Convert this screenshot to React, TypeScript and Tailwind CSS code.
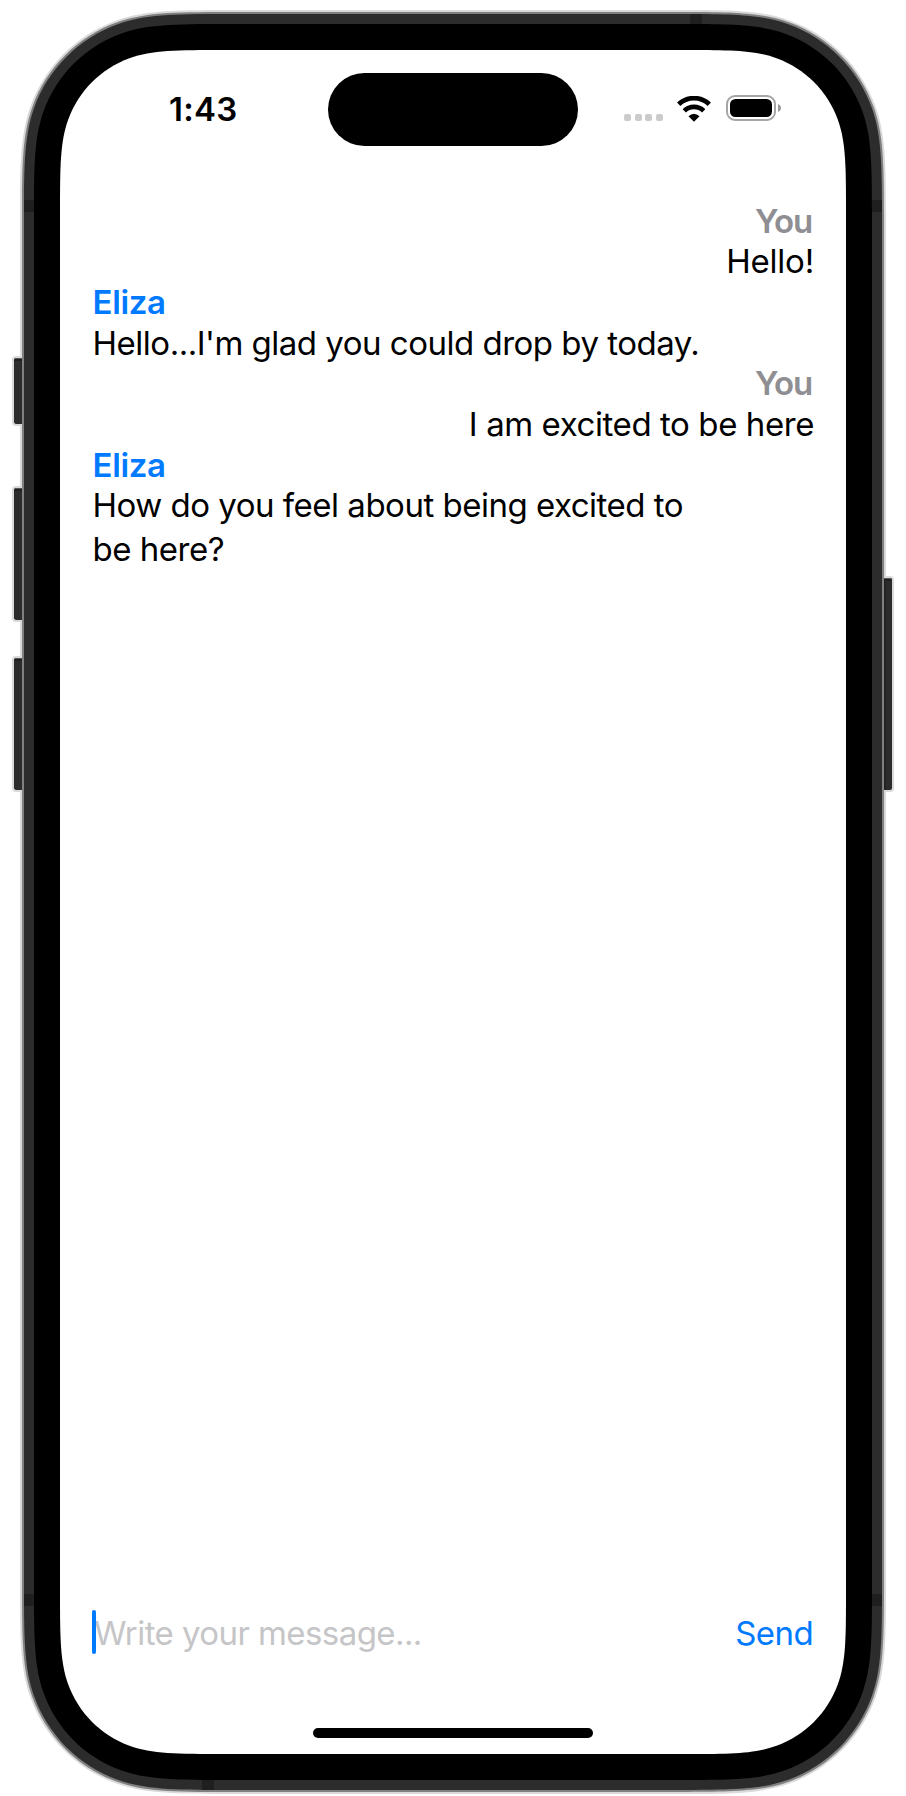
import type { ReactNode } from 'react';

type Point = [number, number];

// One corner as three cubic segments, from the vertical edge to the horizontal one, in units of the radius.
const SMOOTH: Point[] = [
  [0, 1.5], [0, 1.06], [0, 0.838],
  [0.074911, 0.631494], [0.169059, 0.372824], [0.372824, 0.169059],
  [0.631494, 0.074911], [0.838, 0], [1.06, 0], [1.5, 0],
];
// The same three segments for a plain quarter circle, used to offset the smooth corner outwards.
const ROUND: Point[] = [
  [0, 1], [0, 0.8893], [0.0185, 0.7791],
  [0.0545, 0.6744], [0.1547, 0.3834], [0.3834, 0.1547],
  [0.6744, 0.0545], [0.7791, 0.0185], [0.8893, 0], [1, 0],
];

const SCREEN_RADIUS = 110;

/** Outline of a w×h box whose corners lie `offset` px outside the screen's corners. */
function outline(w: number, h: number, offset: number): string {
  const corner = SMOOTH.map(([x, y], i): Point => [
    x * SCREEN_RADIUS + ROUND[i][0] * offset,
    y * SCREEN_RADIUS + ROUND[i][1] * offset,
  ]);
  const mirrored = [...corner].reverse();
  const corners: Point[][] = [
    corner,
    mirrored.map(([x, y]): Point => [w - x, y]),
    corner.map(([x, y]): Point => [w - x, h - y]),
    mirrored.map(([x, y]): Point => [x, h - y]),
  ];
  const d = corners
    .map((points, i) => {
      const [first, ...rest] = points.map(([x, y]) => `${x.toFixed(2)} ${y.toFixed(2)}`);
      return `${i === 0 ? 'M' : 'L'}${first}C${rest.join(' ')}`;
    })
    .join('');
  return `path("${d}Z")`;
}

type LayerProps = { w: number; h: number; offset: number; className: string; children: ReactNode };

function Layer({ w, h, offset, className, children }: LayerProps) {
  return (
    <div className={className} style={{ width: w, height: h, clipPath: outline(w, h, offset) }}>
      {children}
    </div>
  );
}

function Antennas() {
  return (
    <>
      <span className="absolute top-0 left-[666px] h-[10px] w-[12px] bg-[#1f1f1f]" />
      <span className="absolute bottom-0 left-[178px] h-[10px] w-[12px] bg-[#1f1f1f]" />
      <span className="absolute top-[186px] left-0 h-[12px] w-[10px] bg-[#1f1f1f]" />
      <span className="absolute top-[186px] right-0 h-[12px] w-[10px] bg-[#1f1f1f]" />
      <span className="absolute top-[1580px] left-0 h-[12px] w-[10px] bg-[#1f1f1f]" />
      <span className="absolute top-[1580px] right-0 h-[12px] w-[10px] bg-[#1f1f1f]" />
    </>
  );
}

function LeftKey({ className }: { className: string }) {
  return (
    <div className={`w-[10px] rounded-l-[4px] border-2 border-r-0 border-[#dadada] bg-[#2c2c2c] ${className}`}>
      <div className="h-[3px] rounded-tl-[2px] border-t border-[#555] bg-[#202020]" />
    </div>
  );
}

function WifiIcon() {
  return (
    <svg width="34" height="26" viewBox="0 0 34 26" fill="none" stroke="#000">
      <path d="M1.7 8.3A22 22 0 0 1 32.3 8.3" strokeWidth="4.7" />
      <path d="M7.3 14.8A13.8 13.8 0 0 1 26.7 14.8" strokeWidth="4.7" />
      <path d="M11.5 20.2Q17 15.2 22.5 20.2L17 25.7Z" fill="#000" stroke="none" />
    </svg>
  );
}

function BatteryIcon() {
  return (
    <div className="flex items-center gap-[2px]">
      <div className="h-[26px] w-[50px] rounded-[9px] border-2 border-[#a6a6a6] p-[2px]">
        <div className="h-full w-full rounded-[5.5px] bg-black" />
      </div>
      <svg width="3" height="8" viewBox="0 0 3 8">
        <path d="M0 0C1.8.7 3 2.2 3 4S1.8 7.3 0 8Z" fill="#999" />
      </svg>
    </div>
  );
}

function StatusBar() {
  return (
    <header className="grid h-[118px] shrink-0 grid-cols-[268px_250px_1fr] items-center">
      <span className="-mt-px pl-[109px] text-[33px] leading-[36px] font-semibold tracking-[0.3px]">1:43</span>
      <div className="mt-[0.5px] h-[73.5px] rounded-full bg-black" />
      <div className="-mt-[2px] flex items-center pl-[46px]">
        <div className="mt-[19px] flex gap-[3.67px]">
          <span className="size-[7px] rounded-[2px] bg-[#cbcbcb]" />
          <span className="size-[7px] rounded-[2px] bg-[#cbcbcb]" />
          <span className="size-[7px] rounded-[2px] bg-[#cbcbcb]" />
          <span className="size-[7px] rounded-[2px] bg-[#cbcbcb]" />
        </div>
        <div className="mt-px ml-[14.3px]">
          <WifiIcon />
        </div>
        <div className="ml-[14.7px]">
          <BatteryIcon />
        </div>
      </div>
    </header>
  );
}

function Conversation() {
  return (
    <main className="flex flex-1 flex-col pt-[32.8px] pr-8 pl-[32.6px] text-[33px] leading-[40.667px] tracking-[-0.48px]">
      <div className="text-right">
        <p className="pr-[2px] font-semibold tracking-[-1.2px] text-[#8e8e93]">You</p>
        <p className="tracking-[-0.2px]">Hello!</p>
      </div>
      <div>
        <p className="font-semibold tracking-[-0.35px] text-[#007aff]">Eliza</p>
        <p className="tracking-[-0.5px]">Hello...I'm glad you could drop by today.</p>
      </div>
      <div className="text-right">
        <p className="pr-[2px] font-semibold tracking-[-1.2px] text-[#8e8e93]">You</p>
        <p className="tracking-[-0.42px]">I am excited to be here</p>
      </div>
      <div>
        <p className="font-semibold tracking-[-0.35px] text-[#007aff]">Eliza</p>
        <p className="-mt-[2.5px] max-w-[620px] leading-[44px] tracking-[-0.5px]">
          How do you feel about being excited to be here?
        </p>
      </div>
    </main>
  );
}

function Composer() {
  return (
    <div className="flex h-[44px] items-center px-8 text-[33px] leading-[44px]">
      <span className="z-10 -mr-[2px] h-[44px] w-[4px] rounded-full bg-[#007aff]" />
      <input
        className="h-[44px] min-w-0 flex-1 bg-transparent pt-[2px] tracking-[-0.57px] outline-none placeholder:text-[#c5c5c7]"
        placeholder="Write your message..."
      />
      <button className="pt-px pr-px tracking-[-0.6px] text-[#007aff]">Send</button>
    </div>
  );
}

export default function App() {
  return (
    <div className="flex h-[1796px] w-[906px] items-start overflow-hidden bg-white pt-[10px] pl-[12px] font-['Inter','Liberation_Sans',sans-serif] text-black">
      <div className="z-10 -mr-[2px] flex flex-col">
        <LeftKey className="mt-[346px] h-[70px]" />
        <LeftKey className="mt-[60px] h-[136px]" />
        <LeftKey className="mt-[34px] h-[136px]" />
      </div>

      <Layer w={866} h={1784} offset={40} className="shrink-0 bg-[#dadada] p-[2px]">
        <Layer w={862} h={1780} offset={38} className="bg-[#808080] p-[2px]">
          <Layer w={858} h={1776} offset={36} className="relative bg-[#2c2c2c] p-[10px]">
            <Antennas />
            <Layer w={838} h={1756} offset={26} className="relative bg-black p-[26px]">
              <Layer w={786} h={1704} offset={0} className="flex flex-col bg-white">
                <StatusBar />
                <Conversation />
                <Composer />
                <div className="mt-[74px] mb-[16px] h-[10px] w-[280px] self-center rounded-full bg-black" />
              </Layer>
            </Layer>
          </Layer>
        </Layer>
      </Layer>

      <div className="z-10 mt-[566px] -ml-[2px] h-[216px] w-[10px] rounded-r-[4px] border-2 border-l-0 border-[#dadada] bg-[#2c2c2c]">
        <div className="h-full w-[2px] bg-[#232323]">
          <div className="h-[3px] w-[8px] rounded-tr-[2px] border-t border-[#555] bg-[#202020]" />
        </div>
      </div>
    </div>
  );
}
